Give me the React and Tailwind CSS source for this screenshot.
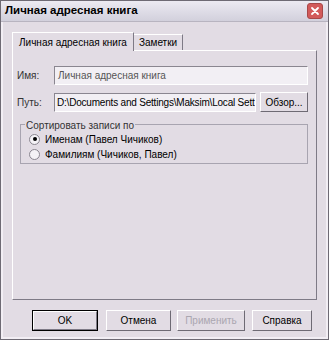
export default function App() {
  const font = { fontFamily: '"Liberation Sans", Arial, sans-serif' };

  return (
    <div className="w-[329px] h-[340px] bg-[#e2dce4] text-black overflow-hidden" style={font}>
      <div className="w-full h-full border border-[#6e6a74] flex flex-col">
        {/* title bar */}
        <div className="h-[21px] flex items-center justify-between pl-[4px] pr-[5px] bg-gradient-to-b from-[#eceaf2] to-[#d2d0dc] border-b border-[#b8b4c0]">
          <span className="text-[11.5px] font-bold">Личная адресная книга</span>
          <div className="w-[16px] h-[16px] rounded-[3px] bg-[#d25a5a] border border-[#a84848] flex items-center justify-center">
            <svg width="10" height="10" viewBox="0 0 10 10">
              <path d="M2 2 L8 8 M8 2 L2 8" stroke="#fff" strokeWidth="1.8" strokeLinecap="round" />
            </svg>
          </div>
        </div>

        <div className="flex-1 flex flex-col px-[9px] pt-[9px] border-l-2 border-r-2 border-b-2 border-[#f2eef4]">
          {/* tabs */}
          <div className="flex items-end h-[19px] text-[10px]">
            <div className="h-[19px] px-[6px] flex items-center border-t border-l border-r border-t-white border-l-white border-r-[#7e7a86] bg-[#e2dce4] relative -mb-px z-10">
              Личная адресная книга
            </div>
            <div className="h-[16px] px-[5px] flex items-center border-t border-r border-t-white border-r-[#7e7a86]">
              Заметки
            </div>
          </div>

          {/* panel */}
          <div className="h-[250px] border border-t-white border-l-white border-r-[#7e7a86] border-b-[#7e7a86] pl-[4px] pr-[8px] pt-[15px] text-[10px]">
            <div className="flex items-center h-[19px]">
              <span className="w-[37px] text-[#333]">Имя:</span>
              <div className="flex-1 h-[19px] bg-[#f2eff4] border border-t-[#8a8690] border-l-[#8a8690] border-r-white border-b-white flex items-center px-[3px] text-[#555] overflow-hidden whitespace-nowrap">
                Личная адресная книга
              </div>
            </div>
            <div className="flex items-center h-[20px] mt-[7px]">
              <span className="w-[37px] text-[#333]">Путь:</span>
              <div className="w-[202px] h-[19px] bg-[#f2eff4] border border-t-[#8a8690] border-l-[#8a8690] border-r-white border-b-white flex items-center px-[2px] overflow-hidden whitespace-nowrap tracking-[-0.2px]">
                D:\Documents and Settings\Maksim\Local Sett
              </div>
              <div className="ml-[4px] flex-1 h-[20px] border border-t-white border-l-white border-r-[#6e6a74] border-b-[#6e6a74] flex items-center justify-center">
                Обзор...
              </div>
            </div>

            <div className="mt-[12px] ml-[3px] h-[40px] border border-[#a8a4b0] relative">
              <span className="absolute -top-[7px] left-[4px] px-[1px] bg-[#e2dce4] text-[#333]">Сортировать записи по</span>
              <div className="pt-[7px] pl-[8px] flex flex-col gap-[1px]">
                <div className="flex items-center gap-[5px] h-[14px]">
                  <div className="w-[11px] h-[11px] rounded-full bg-[#f4f2f6] border border-[#8a8690] flex items-center justify-center">
                    <div className="w-[4px] h-[4px] rounded-full bg-black" />
                  </div>
                  <span>Именам (Павел Чичиков)</span>
                </div>
                <div className="flex items-center gap-[5px] h-[14px]">
                  <div className="w-[11px] h-[11px] rounded-full bg-[#f4f2f6] border border-[#8a8690]" />
                  <span>Фамилиям (Чичиков, Павел)</span>
                </div>
              </div>
            </div>
          </div>

          {/* buttons */}
          <div className="flex justify-end mt-[10px] pr-[5px] text-[10px]">
            <div className="w-[66px] h-[21px] border border-black flex items-center justify-center">
              <div className="w-full h-full border border-t-white border-l-white border-r-[#7e7a86] border-b-[#7e7a86] flex items-center justify-center">OK</div>
            </div>
            <div className="ml-[8px] w-[65px] h-[21px] border border-t-white border-l-white border-r-[#6e6a74] border-b-[#6e6a74] flex items-center justify-center">Отмена</div>
            <div className="ml-[6px] w-[68px] h-[21px] border border-t-white border-l-white border-r-[#6e6a74] border-b-[#6e6a74] flex items-center justify-center text-[#aaa6b0]">Применить</div>
            <div className="ml-[7px] w-[60px] h-[21px] border border-t-white border-l-white border-r-[#6e6a74] border-b-[#6e6a74] flex items-center justify-center">Справка</div>
          </div>
        </div>
      </div>
    </div>
  );
}
